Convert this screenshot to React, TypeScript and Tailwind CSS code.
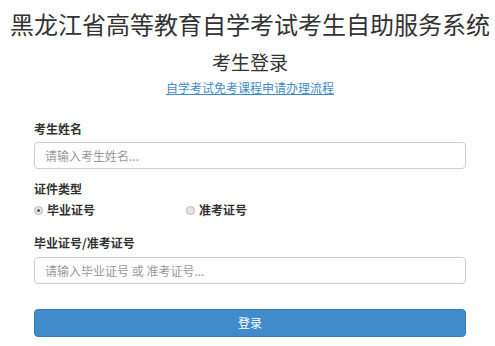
import React from "react";

const font = { fontFamily: '"Noto Sans CJK SC", "Noto Sans", sans-serif' };

function Radio({ checked, label, className }: { checked?: boolean; label: string; className?: string }) {
  return (
    <label className={`flex items-center ${className ?? ""}`}>
      <span className="w-[9px] h-[9px] rounded-full border border-[#b5b5b5] bg-[#e6e6e6] flex items-center justify-center">
        {checked && <span className="w-[3px] h-[3px] rounded-full bg-[#555]" />}
      </span>
      <span className="ml-[4px] text-[12px] leading-[16px] font-bold text-[#333]">{label}</span>
    </label>
  );
}

export default function App() {
  return (
    <div className="w-[495px] h-[346px] bg-white overflow-hidden text-[#333]" style={font}>
      <div className="w-[500px]">
        <h1 className="pt-[8px] text-center text-[24px] leading-[32px] text-[#333] whitespace-nowrap">
          黑龙江省高等教育自学考试考生自助服务系统
        </h1>
        <h2 className="mt-[10px] text-center text-[19px] leading-[24px] text-[#333]">考生登录</h2>
        <div className="mt-[6px] text-center text-[12px] leading-[16px]">
          <a className="text-[#428bca] underline">自学考试免考课程申请办理流程</a>
        </div>
        <div className="px-[34px]">
          <div className="w-[432px]">
            <div className="mt-[25px] text-[12px] leading-[16px] font-bold">考生姓名</div>
            <div className="mt-[5px] h-[27px] border border-[#ccc] rounded-[4px] flex items-center pl-[10px] text-[12px] text-[#999]">
              请输入考生姓名...
            </div>
            <div className="mt-[12px] text-[12px] leading-[16px] font-bold">证件类型</div>
            <div className="mt-[5px] flex">
              <Radio checked label="毕业证号" className="w-[152px]" />
              <Radio label="准考证号" />
            </div>
            <div className="mt-[17px] text-[12px] leading-[16px] font-bold">毕业证号/准考证号</div>
            <div className="mt-[6px] h-[27px] border border-[#ccc] rounded-[4px] flex items-center pl-[10px] text-[12px] text-[#999]">
              请输入毕业证号 或 准考证号...
            </div>
            <button className="mt-[25px] w-full h-[28px] bg-[#428bca] border border-[#357ebd] rounded-[4px] text-white text-[12px] flex items-center justify-center">
              登录
            </button>
          </div>
        </div>
      </div>
    </div>
  );
}
